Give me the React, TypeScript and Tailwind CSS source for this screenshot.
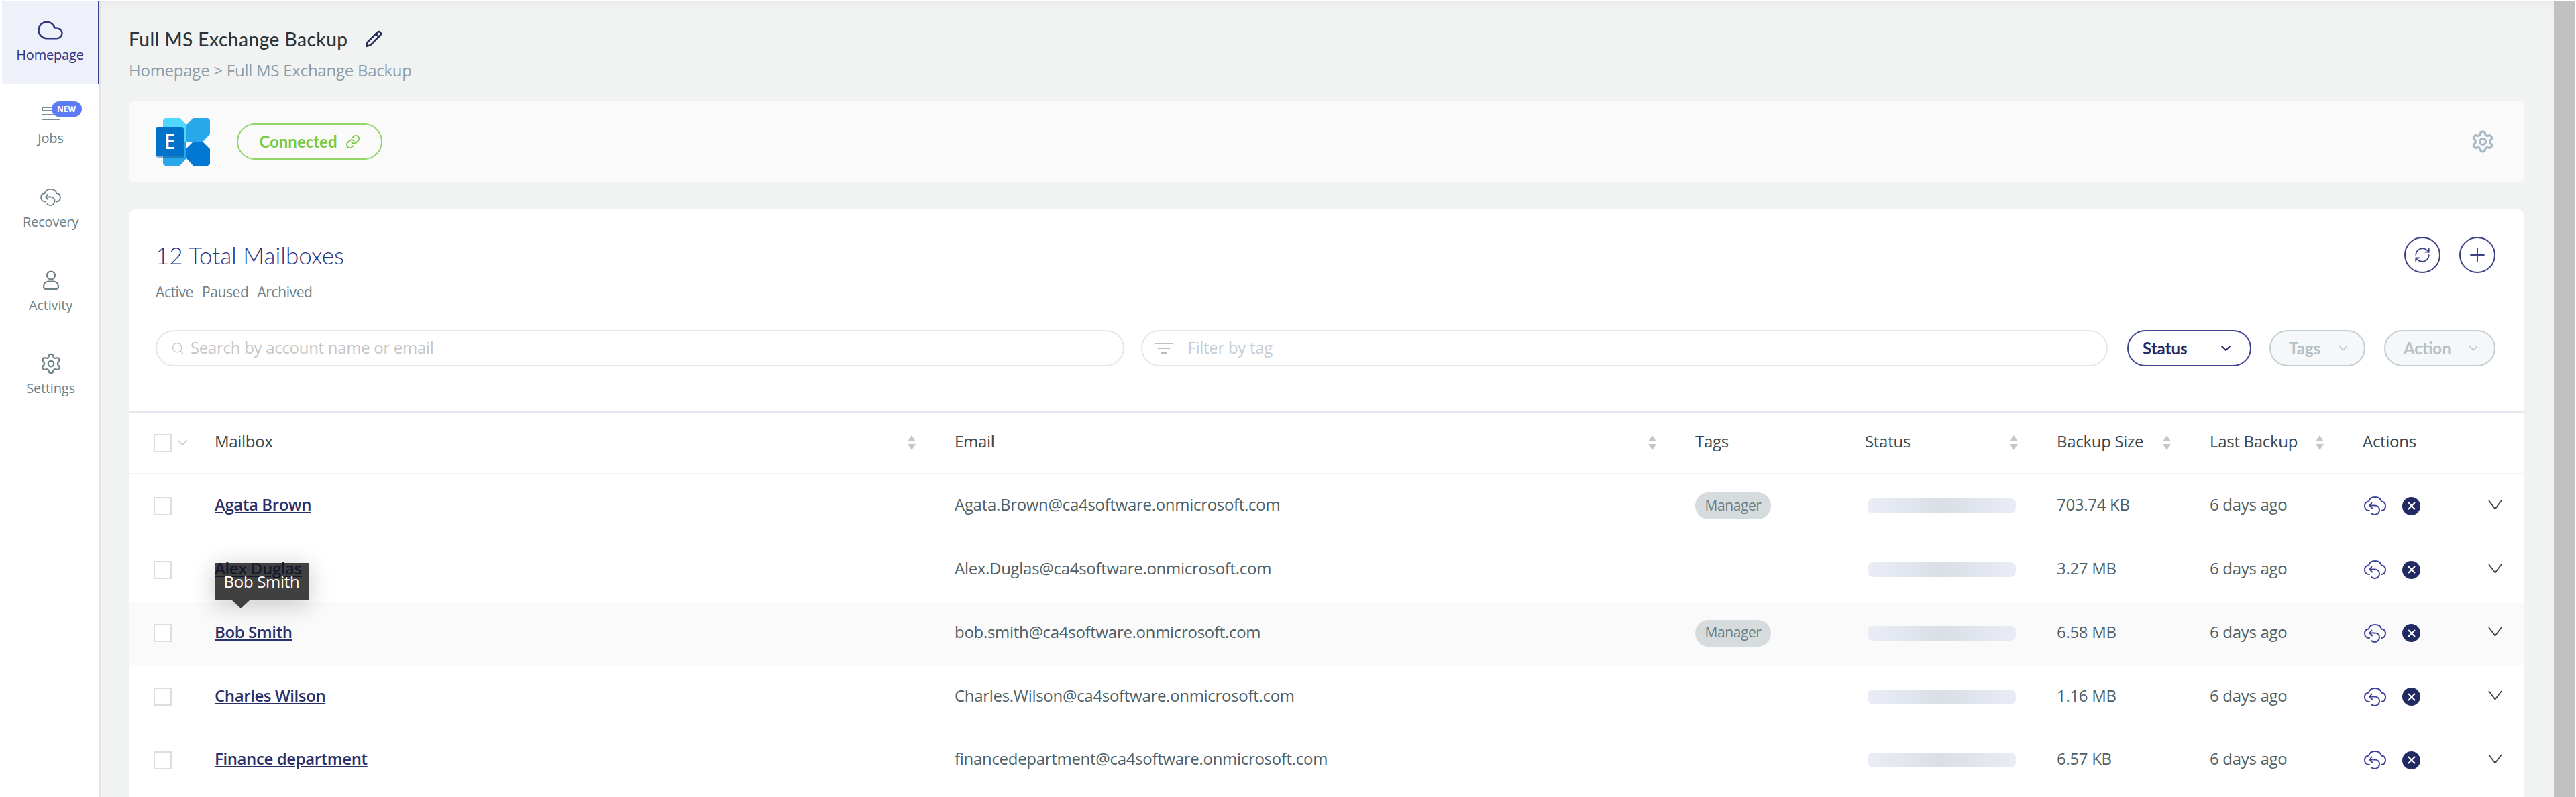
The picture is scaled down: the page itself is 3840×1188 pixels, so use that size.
import React from 'react';
import { ChevronDown, Cloud, Link, Pencil, Plus, RefreshCw, Search, Settings, X } from 'lucide-react';

const heading = 'font-["Lato",sans-serif]';

const rows = [
  { name: 'Agata Brown', email: 'Agata.Brown@ca4software.onmicrosoft.com', tag: true, size: '703.74 KB' },
  { name: 'Alex Duglas', email: 'Alex.Duglas@ca4software.onmicrosoft.com', tag: false, size: '3.27 MB' },
  { name: 'Bob Smith', email: 'bob.smith@ca4software.onmicrosoft.com', tag: true, size: '6.58 MB' },
  { name: 'Charles Wilson', email: 'Charles.Wilson@ca4software.onmicrosoft.com', tag: false, size: '1.16 MB' },
  { name: 'Finance department', email: 'financedepartment@ca4software.onmicrosoft.com', tag: false, size: '6.57 KB' },
];

const gridCols = 'grid grid-cols-[128px_1103px_1104px_253px_286px_228px_228px_1fr] items-center';

function CloudUndo({ className }: { className?: string }) {
  return (
    <svg viewBox="0 0 33 28" fill="none" stroke="currentColor" strokeWidth="2" strokeLinecap="round" strokeLinejoin="round" className={className}>
      <path d="M8 21C3 21 1 17.5 1 14C1 10.5 3.5 8 7 7.5C8 3.5 11.5 1 16.5 1C21.5 1 25 3.5 26 7.5C29.5 8 32 10.5 32 14C32 17.5 30 20.5 26 21" />
      <path d="M11.5 9.5L8.5 13.5L12 17.5" />
      <path d="M9 13.5H16C20 13.5 23 16 23 20C23 24 20 27 16 27C13.5 27 12 26 11 25" />
    </svg>
  );
}

function PersonIcon({ className }: { className?: string }) {
  return (
    <svg viewBox="0 0 24 29" fill="none" stroke="currentColor" strokeWidth="2.2" className={className}>
      <circle cx="12" cy="7.5" r="6" />
      <path d="M8 16.5H16C20 16.5 23 20 23 24.5C23 26.5 22 27.8 20 27.8H4C2 27.8 1 26.5 1 24.5C1 20 4 16.5 8 16.5Z" />
    </svg>
  );
}

function JobsIcon() {
  return (
    <div className="relative h-[34px] w-[60px]">
      <svg viewBox="0 0 28 22" fill="none" stroke="#7d9097" strokeWidth="2" className="absolute top-[6px] left-[16px] h-[22px] w-[28px]">
        <rect x="1" y="2" width="22" height="5" />
        <path d="M0 13H22M0 20H27" />
      </svg>
      <span className="absolute top-[-1px] left-[31px] flex h-[23px] w-[45px] items-center justify-center rounded-full bg-[#5c7cf6] text-[12px] font-bold text-white">NEW</span>
    </div>
  );
}

function ExchangeLogo() {
  return (
    <svg viewBox="0 0 81 71" className="h-[71px] w-[81px]">
      <path d="M11 3L14 0H36L46 10V35H11Z" fill="#50d9ff" />
      <path d="M11 35H46V60L36 71H14L11 68Z" fill="#28a8ea" />
      <path d="M46 10L56 0H78L81 3V24L70 35H46Z" fill="#28a8ea" />
      <path d="M46 45L56 35H70L81 46V68L78 71H56L46 60Z" fill="#0078d4" />
      <rect x="1" y="16" width="42" height="43" rx="3" fill="#0a4f87" opacity="0.45" />
      <rect x="0" y="14" width="42" height="43" rx="3" fill="#0072c9" />
      <text x="21" y="46" textAnchor="middle" fontFamily="Open Sans, sans-serif" fontWeight="600" fontSize="30" fill="#fff">E</text>
    </svg>
  );
}

function SortIcon() {
  return (
    <svg viewBox="0 0 14 22" className="h-[22px] w-[14px] shrink-0" fill="#c6c6c6">
      <path d="M7 0L13 9H1Z" />
      <path d="M7 22L1 13H13Z" />
    </svg>
  );
}

function NavItem({ label, icon, active }: { label: string; icon: React.ReactNode; active?: boolean }) {
  return (
    <div className={`ml-[3px] flex h-[124.3px] flex-col items-center pt-[27px] ${active ? 'border-r-2 border-[#3d4392] bg-[#eef0fa] text-[#30367f]' : 'text-[#6e8187]'}`}>
      <div className="flex h-[34px] items-center justify-center">{icon}</div>
      <span className="mt-[6px] text-[20px] leading-[28px] tracking-[-0.2px]">{label}</span>
    </div>
  );
}

function HeaderCell({ label, sort = true }: { label: string; sort?: boolean }) {
  return (
    <div className="flex items-center justify-between pr-[57px] text-[24px] font-medium text-[#37474f]">
      <span className="pb-[4px] tracking-[-0.3px]">{label}</span>
      {sort && <SortIcon />}
    </div>
  );
}

export default function App() {
  return (
    <div className='flex h-[1188px] w-[3840px] overflow-hidden bg-white pt-px font-["Open_Sans",sans-serif]'>
      {/* Sidebar */}
      <aside className="w-[150px] shrink-0 border-r-2 border-[#e2e4e4] bg-white">
        <NavItem label="Homepage" active icon={<Cloud className="h-[42px] w-[42px]" strokeWidth={1.4} />} />
        <NavItem label="Jobs" icon={<JobsIcon />} />
        <NavItem label="Recovery" icon={<CloudUndo className="h-[26px] w-[31px]" />} />
        <NavItem label="Activity" icon={<PersonIcon className="h-[29px] w-[24px]" />} />
        <NavItem label="Settings" icon={<Settings className="h-[36px] w-[34px]" strokeWidth={1.6} />} />
      </aside>

      {/* Main */}
      <main className="flex min-w-0 flex-1 flex-col bg-[#f1f3f3] pr-[44px] pl-[42px]">
        <div className="-mr-[44px] -ml-[42px] h-[14px] bg-gradient-to-b from-[#e9ebec] to-[#f1f3f3]" />
        <div className={`mt-[27px] flex h-[32px] items-center text-[28px] leading-[32px] font-medium tracking-[0.5px] text-[#2b3338] ${heading}`}>
          <span>Full MS Exchange Backup</span>
          <Pencil className="ml-[25px] h-[26px] w-[26px] text-[#252b5e]" strokeWidth={2.4} />
        </div>
        <div className="mt-[15px] text-[24px] leading-[32px] tracking-[-0.25px] text-[#8b9ca8]">Homepage &gt; Full MS Exchange Backup</div>

        {/* Connection card */}
        <section className="mt-[29px] flex h-[122px] shrink-0 items-center justify-between rounded-[10px] bg-[#fafafa] pr-[44px] pl-[40px]">
          <div className="flex items-center gap-[40px]">
            <ExchangeLogo />
            <div className={`flex h-[54px] w-[217px] items-center justify-center gap-[12px] rounded-full border-2 border-[#92d667] text-[24px] font-bold text-[#79c843] ${heading}`}>
              <span>Connected</span>
              <Link className="h-[22px] w-[22px]" strokeWidth={2} />
            </div>
          </div>
          <Settings className="h-[36px] w-[36px] text-[#a9b7c1]" strokeWidth={2.1} />
        </section>

        {/* Mailboxes card */}
        <section className="mt-[40px] flex-1 rounded-t-[10px] bg-white">
          <div className="flex items-start justify-between pr-[43px] pl-[40px]">
            <div className="pt-[46px]">
              <h1 className={`text-[35px] leading-[44px] font-light text-[#2a3480] ${heading}`}>12 Total Mailboxes</h1>
              <div className="mt-[19px] flex gap-[13px] text-[21px] leading-[28px] tracking-[-0.4px] text-[#6e8187]">
                <span>Active</span>
                <span>Paused</span>
                <span>Archived</span>
              </div>
            </div>
            <div className="flex gap-[28px] pt-[41px] text-[#3c4285]">
              <button className="flex h-[54px] w-[54px] items-center justify-center rounded-full border-2 border-[#3c4285]">
                <RefreshCw className="h-[26px] w-[26px]" strokeWidth={1.6} />
              </button>
              <button className="flex h-[54px] w-[54px] items-center justify-center rounded-full border-2 border-[#3c4285]">
                <Plus className="h-[34px] w-[34px]" strokeWidth={1.4} />
              </button>
            </div>
          </div>

          {/* Filters */}
          <div className="mt-[43px] flex h-[54px] items-center pr-[43px] pl-[40px]">
            <div className="flex h-[54px] flex-1 items-center rounded-full border-2 border-[#e6e6e6] pb-[3px] pl-[21px] text-[24px] tracking-[-0.3px] text-[#c6c6c6]">
              <Search className="mt-[3px] h-[20px] w-[20px]" strokeWidth={1.6} />
              <span className="ml-[9px]">Search by account name or email</span>
            </div>
            <div className="ml-[25px] flex h-[54px] flex-1 items-center rounded-full border-2 border-[#e6e6e6] pb-[3px] pl-[19px] text-[24px] tracking-[-0.3px] text-[#c5cdd5]">
              <svg viewBox="0 0 27 16" fill="none" stroke="#b5bfc8" strokeWidth="1.8" className="mt-[3px] h-[16px] w-[27px]">
                <path d="M0 1H27M4 8H22M8 15H18" />
              </svg>
              <span className="ml-[22px]">Filter by tag</span>
            </div>
            <div className={`ml-[29px] flex h-[54px] w-[185px] items-center justify-between rounded-full border-2 border-[#3c4290] pr-[24px] pl-[21px] text-[24px] font-bold text-[#232a63] ${heading}`}>
              <span>Status</span>
              <ChevronDown className="h-[24px] w-[24px]" strokeWidth={2} />
            </div>
            <div className={`ml-[27px] flex h-[54px] w-[143px] items-center justify-between rounded-full border-2 border-[#c3ced2] bg-[#f5f7f8] pr-[20px] pl-[27px] text-[24px] font-bold text-[#b5c1c6] ${heading}`}>
              <span>Tags</span>
              <ChevronDown className="h-[22px] w-[22px]" strokeWidth={1.5} />
            </div>
            <div className={`ml-[28px] flex h-[54px] w-[166px] items-center justify-between rounded-full border-2 border-[#c3ced2] bg-[#f5f7f8] pr-[20px] pl-[27px] text-[24px] font-bold text-[#b5c1c6] ${heading}`}>
              <span>Action</span>
              <ChevronDown className="h-[22px] w-[22px]" strokeWidth={1.5} />
            </div>
          </div>

          {/* Table */}
          <div className={`mt-[67px] h-[94px] border-t-2 border-b-2 border-t-[#e4e9ef] border-b-[#f3f4f5] ${gridCols}`}>
            <div className="flex items-center pl-[37px]">
              <span className="h-[27px] w-[27px] border-2 border-[#dedede]" />
              <ChevronDown className="ml-[3px] h-[26px] w-[26px] text-[#c4c4c4]" strokeWidth={1.3} />
            </div>
            <HeaderCell label="Mailbox" />
            <HeaderCell label="Email" />
            <HeaderCell label="Tags" sort={false} />
            <HeaderCell label="Status" />
            <HeaderCell label="Backup Size" />
            <HeaderCell label="Last Backup" />
            <HeaderCell label="Actions" sort={false} />
          </div>
          {rows.map((row) => (
            <div key={row.email} className={`h-[94.75px] text-[24px] text-[#4f5f66] ${gridCols} ${row.name === 'Bob Smith' ? 'bg-[#fafafa]' : ''}`}>
              <div className="pl-[37px]">
                <div className="h-[27px] w-[27px] border-2 border-[#dedede] bg-white" />
              </div>
              <div className="relative pb-[4px]">
                <a className={`relative z-10 font-semibold tracking-[-0.4px] underline ${row.name === 'Alex Duglas' ? 'text-[#14172e]' : 'text-[#2a3068]'}`}>{row.name}</a>
                {row.name === 'Alex Duglas' && (
                  <div className="absolute top-[10px] left-0 flex h-[56px] w-[140px] items-center justify-center bg-[#404040] text-[24px] tracking-[-0.3px] text-white shadow-[0_6px_36px_rgba(0,0,0,0.22)]">
                    <span className="relative z-20">Bob Smith</span>
                    <span className="absolute top-full left-[26px] border-x-[13px] border-t-[12px] border-x-transparent border-t-[#404040]" />
                  </div>
                )}
              </div>
              <div className="pb-[4px] tracking-[-0.3px]">{row.email}</div>
              <div>
                {row.tag && (
                  <span className="flex h-[40px] w-[113px] items-center justify-center rounded-full bg-[#d6dcde] pb-[2px] text-[21px] tracking-[-0.4px] text-[#6b7f86]">Manager</span>
                )}
              </div>
              <div className="pl-[4px]">
                <div className="h-[22px] w-[221px] rounded-[8px] bg-gradient-to-r from-[#eaedf6] via-[#dadfe6] to-[#e9ecf5]" />
              </div>
              <div className="pb-[4px] tracking-[-0.3px]">{row.size}</div>
              <div className="pb-[4px] tracking-[-0.3px]">6 days ago</div>
              <div className="flex items-center pl-[2px]">
                <CloudUndo className="h-[28px] w-[33px] text-[#3c4398]" />
                <span className="ml-[24px] flex h-[27px] w-[27px] items-center justify-center rounded-full bg-[#232a63] text-white">
                  <X className="h-[18px] w-[18px]" strokeWidth={2.6} />
                </span>
                <svg viewBox="0 0 21 15" fill="none" stroke="#37474f" strokeWidth="1.8" className="ml-[101px] h-[15px] w-[21px] -translate-y-[2px]">
                  <path d="M1 1L10.5 13.5L20 1" />
                </svg>
              </div>
            </div>
          ))}
        </section>
      </main>

      {/* Scrollbar */}
      <div className="w-[33px] shrink-0 bg-white pr-[2px]">
        <div className="h-full bg-[#c1c1c1]" />
      </div>
    </div>
  );
}
